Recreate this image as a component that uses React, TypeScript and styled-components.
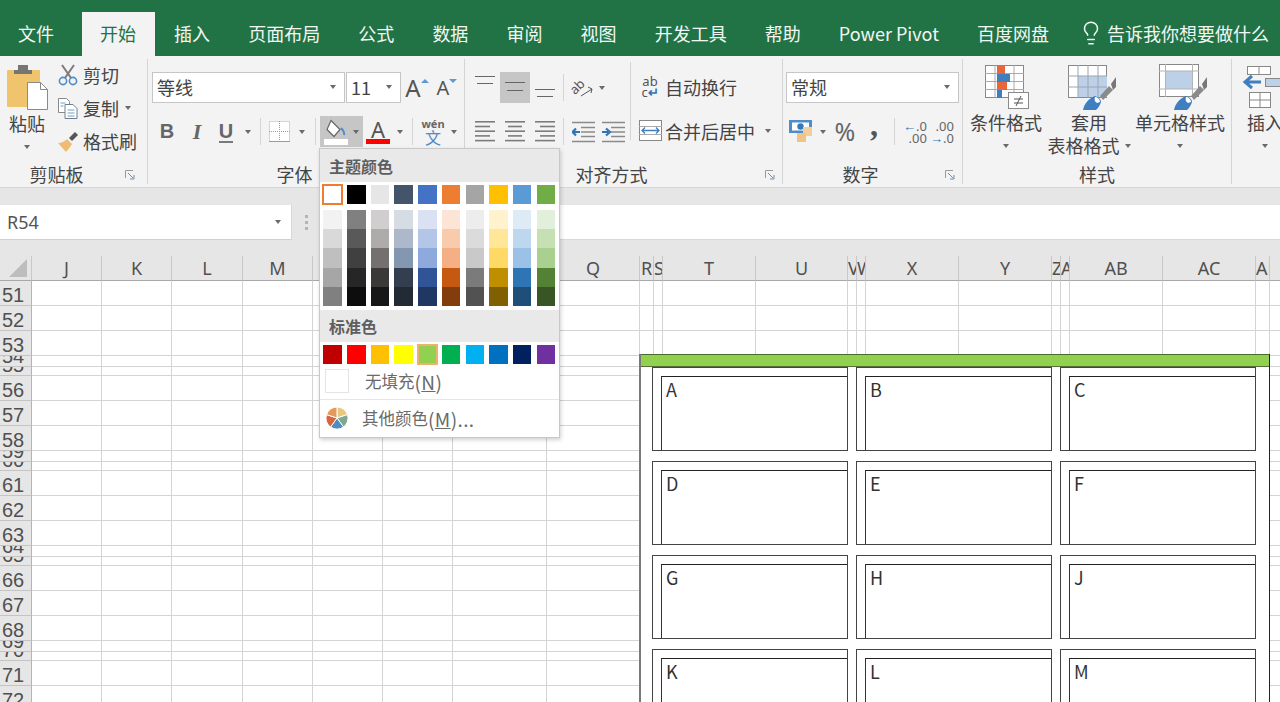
import React from "react";
import styled, { createGlobalStyle } from "styled-components";
import { Lightbulb } from "lucide-react";

const cjk = `"Noto Sans CJK SC", "Noto Sans", sans-serif`;
const ink = "#444";

const GlobalStyle = createGlobalStyle`
  html, body { margin: 0; padding: 0; height: 702px; overflow: hidden; background: #fff; }
  * { box-sizing: border-box; }
`;

const Page = styled.div`
  position: relative;
  width: 1280px;
  height: 702px;
  overflow: hidden;
  display: flex;
  flex-direction: column;
  font-family: ${cjk};
  color: ${ink};
`;

/* ---------- title tabs ---------- */
const TabBar = styled.div`
  height: 56px;
  flex: none;
  background: #217346;
  display: flex;
  align-items: flex-end;
`;

const Tab = styled.div<{ $active?: boolean; $first?: boolean }>`
  height: 44px;
  padding: 0 19px 3px ${(p) => (p.$first || p.$active ? "18px" : "19.1px")};
  margin-right: ${(p) => (p.$first ? "9px" : "0")};
  display: flex;
  align-items: center;
  font-size: 18px;
  white-space: nowrap;
  color: ${(p) => (p.$active ? "#217346" : "#f2f7f4")};
  background: ${(p) => (p.$active ? "#f3f3f3" : "transparent")};
`;

const TellMe = styled.div`
  height: 44px;
  margin-left: 10px;
  padding-bottom: 3px;
  display: flex;
  align-items: center;
  gap: 3px;
  font-size: 18px;
  white-space: nowrap;
  color: #f2f7f4;
`;

/* ---------- ribbon ---------- */
const Ribbon = styled.div`
  height: 132px;
  flex: none;
  background: #f3f3f3;
  border-bottom: 1px solid #d6d6d6;
  display: flex;
  padding-top: 3px;
  overflow: hidden;
`;

const Group = styled.div<{ $w: number; $tail: number }>`
  width: ${(p) => p.$w}px;
  flex: none;
  height: 125px;
  display: grid;
  grid-template-rows: 103px 22px;
  grid-template-columns: 1fr ${(p) => p.$tail}px;
  border-right: 1px solid #d4d4d4;
`;

const GroupBody = styled.div<{ $pad?: number }>`
  grid-column: 1 / 3;
  display: flex;
  padding-left: ${(p) => p.$pad ?? 0}px;
  min-width: 0;
`;

const GroupLabel = styled.div`
  font-size: 18px;
  line-height: 24px;
  text-align: center;
  white-space: nowrap;
`;

const Launcher = styled.svg`
  width: 10px;
  height: 10px;
  justify-self: center;
  align-self: center;
  margin-top: 3px;
`;

const ToolRows = styled.div<{ $ml?: number }>`
  display: flex;
  flex-direction: column;
  padding-top: 13px;
  gap: 13px;
  margin-left: ${(p) => p.$ml ?? 0}px;
`;

const ToolRow = styled.div`
  height: 31px;
  display: flex;
  align-items: center;
`;

const Tool = styled.div<{ $w: number; $active?: boolean; $ml?: number }>`
  width: ${(p) => p.$w}px;
  height: 31px;
  flex: none;
  margin-left: ${(p) => p.$ml ?? 0}px;
  display: flex;
  align-items: center;
  justify-content: center;
  background: ${(p) => (p.$active ? "#c6c6c6" : "transparent")};
`;

const Caret = styled.span<{ $ml?: number }>`
  display: inline-block;
  flex: none;
  margin-left: ${(p) => p.$ml ?? 0}px;
  width: 0;
  height: 0;
  border-left: 3.5px solid transparent;
  border-right: 3.5px solid transparent;
  border-top: 4px solid #6a6a6a;
`;

const Sep = styled.span<{ $ml?: number; $mr?: number }>`
  width: 1px;
  height: 27px;
  flex: none;
  background: #d4d4d4;
  margin-left: ${(p) => p.$ml ?? 0}px;
  margin-right: ${(p) => p.$mr ?? 0}px;
`;

const TallSep = styled.span`
  width: 1px;
  height: 78px;
  margin: 3px 0 0 2px;
  flex: none;
  background: #d4d4d4;
`;

const Select = styled.div<{ $w: number; $ml?: number }>`
  width: ${(p) => p.$w}px;
  height: 31px;
  flex: none;
  margin-left: ${(p) => p.$ml ?? 0}px;
  background: #fff;
  border: 1px solid #c6c6c6;
  display: flex;
  align-items: center;
  justify-content: space-between;
  padding: 0 8px 1px 4px;
  font-size: 18px;
`;

const PasteColumn = styled.div`
  width: 54px;
  flex: none;
  display: flex;
  flex-direction: column;
  align-items: center;
  padding-top: 6px;
  font-size: 18px;
  line-height: 22px;
`;

const PasteIcon = styled.svg`
  width: 42px;
  height: 46px;
  margin-bottom: 1px;
  margin-left: 2px;
`;

const PasteCaret = styled(Caret)`
  margin-top: 11px;
`;

const SmallColumn = styled.div`
  display: flex;
  flex-direction: column;
  margin-left: 3px;
`;

const SmallRow = styled.div`
  height: 33px;
  display: flex;
  align-items: center;
  gap: 4px;
  padding-bottom: 1px;
  font-size: 18px;
  white-space: nowrap;
`;

const SmallIcon = styled.svg`
  width: 22px;
  height: 22px;
  flex: none;
`;

const BoldLetter = styled.span`
  font-family: "Liberation Sans", sans-serif;
  font-weight: 700;
  font-size: 20px;
  color: #666;
`;

const ItalicLetter = styled(BoldLetter)`
  font-style: italic;
  font-family: "Liberation Serif", serif;
  font-size: 22px;
`;

const UnderLetter = styled(BoldLetter)`
  border-bottom: 2px solid #7a7a7a;
  line-height: 20px;
`;

const FontA = styled.span<{ $size: number }>`
  font-family: "Noto Sans", sans-serif;
  font-size: ${(p) => p.$size}px;
  color: #555;
  line-height: 1;
`;

const Tick = styled.span<{ $down?: boolean }>`
  align-self: flex-start;
  margin-top: 7px;
  width: 0;
  height: 0;
  border-left: 4px solid transparent;
  border-right: 4px solid transparent;
  ${(p) =>
    p.$down
      ? "border-top: 4px solid #5b9bd5;"
      : "border-bottom: 4px solid #5b9bd5;"}
`;

const ColorStack = styled.div`
  display: flex;
  flex-direction: column;
  align-items: center;
  width: 24px;
`;

const ColorBar = styled.span<{ $c: string }>`
  width: 24px;
  height: 5px;
  background: ${(p) => p.$c};
`;

const ColorLetter = styled.span`
  font-family: "Noto Sans", sans-serif;
  font-size: 22px;
  line-height: 20px;
  height: 20px;
  color: #555;
`;

const PhoneticStack = styled.div`
  display: flex;
  flex-direction: column;
  align-items: center;
  line-height: 1;
`;

const PhoneticTop = styled.span`
  font-family: "Noto Sans", sans-serif;
  font-size: 11px;
  font-weight: 700;
  color: #666;
`;

const PhoneticBottom = styled.span`
  font-size: 16px;
  color: #4f8cc9;
`;

const TextTool = styled.div`
  height: 31px;
  display: flex;
  align-items: center;
  font-size: 18px;
  white-space: nowrap;
  padding-bottom: 2px;
`;

const WrapIcon = styled.div`
  width: 22px;
  margin-right: 4px;
  font-family: "Noto Sans", sans-serif;
  font-size: 13px;
  line-height: 11px;
  color: #555;
  text-align: center;
`;

const BlueMark = styled.span`
  color: #2f75b5;
  font-weight: 700;
`;

const MergeIcon = styled.svg`
  width: 23px;
  height: 23px;
  margin-right: 3px;
  flex: none;
`;

const Percent = styled.span`
  font-family: "Noto Sans", sans-serif;
  font-size: 25px;
  color: #666;
  padding-bottom: 2px;
`;

const Comma = styled.span`
  font-family: "Liberation Serif", serif;
  font-weight: 700;
  font-size: 32px;
  line-height: 22px;
  color: #555;
  padding-bottom: 14px;
`;

const DecimalStack = styled.div`
  font-family: "Noto Sans", sans-serif;
  font-size: 13px;
  line-height: 12px;
  text-align: right;
  color: #666;
  white-space: nowrap;
`;

const BigButton = styled.div<{ $w: number }>`
  width: ${(p) => p.$w}px;
  flex: none;
  display: flex;
  flex-direction: column;
  align-items: center;
  padding-top: 4px;
  font-size: 18px;
  line-height: 23px;
  white-space: nowrap;
`;

const BigIcon = styled.svg`
  width: 50px;
  height: 48px;
  flex: none;
`;

const ShiftedIcon = styled(BigIcon)`
  margin-left: 5px;
`;

const CaretLine = styled.div`
  height: 23px;
  display: flex;
  align-items: center;
  justify-content: center;
`;

/* ---------- formula bar ---------- */
const FormulaStrip = styled.div`
  height: 68px;
  flex: none;
  background: #e6e6e6;
  padding: 17px 0 16px;
  display: flex;
`;

const NameBox = styled.div`
  width: 292px;
  height: 35px;
  background: #fff;
  border-bottom: 1px solid #d0d0d0;
  border-right: 1px solid #d8d8d8;
  display: flex;
  align-items: center;
  justify-content: space-between;
  padding: 0 10px 0 7px;
  font-family: "Noto Sans", sans-serif;
  font-size: 18px;
  color: #555;
`;

const Grip = styled.div`
  width: 28px;
  display: flex;
  flex-direction: column;
  align-items: center;
  justify-content: center;
  gap: 3px;
`;

const GripDot = styled.span`
  width: 3px;
  height: 3px;
  background: #b5b5b5;
`;

const FormulaInput = styled.div`
  flex: 1;
  background: #fff;
  border-bottom: 1px solid #d8d8d8;
`;

/* ---------- sheet ---------- */
const Sheet = styled.div`
  position: relative;
  flex: 1;
  overflow: hidden;
  background: #fff;
`;

const Cells = styled.div<{ $cols: string; $rows: string }>`
  display: grid;
  grid-template-columns: ${(p) => p.$cols};
  grid-template-rows: ${(p) => p.$rows};
`;

const Corner = styled.div`
  background: #e6e6e6;
  border-bottom: 1px solid #a8a8a8;
  border-right: 1px solid #c8c8c8;
  display: flex;
  align-items: flex-end;
  justify-content: flex-end;
  padding: 0 4px 3px 0;
`;

const CornerMark = styled.span`
  width: 0;
  height: 0;
  border-left: 18px solid transparent;
  border-bottom: 18px solid #bdbdbd;
`;

const ColHead = styled.div`
  background: #e6e6e6;
  border-bottom: 1px solid #a8a8a8;
  border-right: 1px solid #c8c8c8;
  overflow: hidden;
  display: flex;
  align-items: center;
  justify-content: safe center;
  font-family: "Noto Sans", sans-serif;
  font-size: 18px;
  color: #505050;
  white-space: nowrap;
`;

const RowHead = styled.div`
  background: #e6e6e6;
  border-bottom: 1px solid #c4c4c4;
  border-right: 1px solid #b4b4b4;
  overflow: hidden;
  display: flex;
  align-items: flex-end;
  padding-left: 2px;
  font-family: "Liberation Sans", sans-serif;
  font-size: 20px;
  line-height: 20px;
  color: #505050;
`;

const Cell = styled.div`
  border-right: 1px solid #d4d4d4;
  border-bottom: 1px solid #d4d4d4;
`;

/* ---------- shapes on the sheet ---------- */
const Panel = styled.div`
  position: absolute;
  left: 639px;
  top: 98px;
  width: 631px;
  height: 360px;
  background: #fff;
  border-left: 2px solid #7a7a7a;
  border-right: 1px solid #222;
`;

const PanelHeader = styled.div`
  height: 13px;
  background: #92d050;
  border-top: 1px solid #4a6a30;
  border-bottom: 1px solid #55703c;
`;

const PanelGrid = styled.div`
  display: grid;
  grid-template-columns: repeat(3, 196px);
  grid-auto-rows: 84px;
  column-gap: 8px;
  row-gap: 10px;
  padding-left: 11px;
`;

const Card = styled.div`
  border: 1px solid #444;
  padding: 8px 0 0 8px;
  display: flex;
`;

const CardInner = styled.div`
  flex: 1;
  border-top: 1px solid #222;
  border-left: 1px solid #333;
  padding-left: 4px;
  font-size: 18px;
  line-height: 24px;
  color: #333;
`;

/* ---------- colour menu ---------- */
const Menu = styled.div`
  position: absolute;
  left: 319px;
  top: 148px;
  width: 241px;
  height: 290px;
  background: #fff;
  border: 1px solid #c8c8c8;
  box-shadow: 1px 2px 4px rgba(0, 0, 0, 0.18);
`;

const MenuTitle = styled.div`
  height: 33px;
  background: #e9e9e9;
  padding-left: 9px;
  display: flex;
  align-items: center;
  font-size: 16px;
  font-weight: 700;
  color: #5e5e5e;
`;

const MenuTitleSecond = styled(MenuTitle)`
  margin-top: 4px;
  height: 32px;
`;

const Palette = styled.div<{ $mt: number }>`
  display: grid;
  grid-template-columns: repeat(10, 18.5px);
  column-gap: 5.2px;
  margin-top: ${(p) => p.$mt}px;
  padding-left: 3.4px;
`;

const Swatch = styled.div<{ $c: string; $ring?: string; $h?: number }>`
  height: ${(p) => p.$h ?? 18.5}px;
  background: ${(p) => p.$c};
  ${(p) => (p.$ring ? `outline: 2px solid ${p.$ring}; outline-offset: -1px;` : "")}
`;

const ShadeColumn = styled.div`
  display: flex;
  flex-direction: column;
`;

const MenuItem = styled.div<{ $h: number; $line?: boolean }>`
  height: ${(p) => p.$h}px;
  display: flex;
  align-items: center;
  font-size: 16.5px;
  color: #6a6a6a;
  white-space: nowrap;
  ${(p) => (p.$line ? "border-top: 1px solid #e6e6e6;" : "")}
`;

const NoFillBox = styled.span`
  width: 24px;
  height: 24px;
  margin: 0 16px 0 5px;
  border: 1px solid #e4e4e4;
  flex: none;
`;

const PieIcon = styled.svg`
  width: 24px;
  height: 24px;
  margin: 0 13px 0 5px;
  flex: none;
`;

const Hotkey = styled.span`
  font-size: 19px;
  letter-spacing: 0.4px;
`;

const HotkeyLetter = styled.span`
  text-decoration: underline;
`;

/* ---------- drawings ---------- */
const LauncherMark = () => (
  <Launcher viewBox="0 0 10 10">
    <path d="M0.5 8V0.5H8" fill="none" stroke="#9a9a9a" />
    <path d="M3 3l5 5M5 9h4V5" fill="none" stroke="#6f8fae" />
  </Launcher>
);

const HLines = ({ rows, w = 20 }: { rows: [number, number][]; w?: number }) => (
  <svg width={w} height={21} viewBox={`0 0 ${w} 21`}>
    {rows.map(([a, b], i) => (
      <rect key={i} x={a} y={i * 4.7} width={b - a} height={1.6} fill="#7c7c7c" />
    ))}
  </svg>
);

const VAlign = ({ y1, y2 }: { y1: number; y2: number }) => (
  <svg width={20} height={31} viewBox="0 0 20 31">
    <path d={`M0 ${y1 + 0.5}H20M2 ${y2 + 0.5}H18`} stroke="#666" strokeWidth="1" />
  </svg>
);

const Indent = ({ flip }: { flip?: boolean }) => (
  <svg width={23} height={22} viewBox="0 0 23 22">
    <path d="M0 1.5H23M9 6.5H23M9 11H23M9 15.5H23M0 20.5H23" stroke="#8a8a8a" strokeWidth="1.5" />
    <path
      d={flip ? "M0 11H6M4 7.5L8 11L4 14.5" : "M8 11H2M4 7.5L0.5 11L4 14.5"}
      fill="none"
      stroke="#2f75b5"
      strokeWidth="2.2"
    />
  </svg>
);

const ScissorsIcon = () => (
  <SmallIcon viewBox="0 0 22 22">
    <path d="M5 1l9 13M17 1L8 14" stroke="#7b7b7b" strokeWidth="2" fill="none" />
    <circle cx="6" cy="17" r="3.6" fill="none" stroke="#4f8cc9" strokeWidth="1.6" />
    <circle cx="16" cy="17" r="3.6" fill="none" stroke="#4f8cc9" strokeWidth="1.6" />
  </SmallIcon>
);

const CopyIcon = () => (
  <SmallIcon viewBox="0 0 22 22">
    <path d="M1.5 1.5h8l3 3v11h-11z" fill="#fff" stroke="#8a8a8a" />
    <path d="M8 7.5h8l4 4v10H8z" fill="#fff" stroke="#6f7f8f" />
    <path d="M3.5 6h5M3.5 9h3M10.5 13h7M10.5 16h7M10.5 19h7" stroke="#6f9fca" />
  </SmallIcon>
);

const BrushIcon = () => (
  <SmallIcon viewBox="0 0 22 22">
    <path d="M1 13c4 0 7-2 9-4l5 5c-2 3-4 6-6 8-2-2-5-6-8-9z" fill="#eebc72" />
    <path d="M12 8l6-6 3 3-6 6z" fill="#555" />
  </SmallIcon>
);

const BorderIcon = () => (
  <svg width={21} height={21} viewBox="0 0 21 21">
    <rect x="0.5" y="0.5" width="20" height="20" fill="#fff" stroke="#b0b0b0" strokeDasharray="1 1" />
    <path d="M10.5 0V21M0 10.5H21" stroke="#9a9a9a" strokeDasharray="1 1" />
    <path d="M0 20.5H21" stroke="#9a9a9a" />
  </svg>
);

const BucketIcon = () => (
  <svg width={24} height={26} viewBox="0 0 24 26">
    <path d="M7 1.5l9 9-6 7-7-7z" fill="#fff" stroke="#666" strokeWidth="1.2" />
    <path d="M17 9c2 2 4 4 3 7" fill="none" stroke="#4f8cc9" strokeWidth="2" />
    <rect x="0" y="20" width="24" height="6" fill="#fff" />
  </svg>
);

const OrientIcon = () => (
  <svg width={24} height={22} viewBox="0 0 24 22">
    <text x="0" y="15" fontSize="13" fontFamily="Noto Sans" fill="#555" transform="rotate(-45 6 12)">
      ab
    </text>
    <path d="M10 19l11-7M17 10l4 2-1 4" fill="none" stroke="#555" />
  </svg>
);

const CurrencyIcon = () => (
  <svg width={24} height={23} viewBox="0 0 24 23">
    <rect x="0" y="0" width="23" height="13" fill="#4f8cc9" />
    <rect x="3" y="2.5" width="17" height="8" fill="#fff" />
    <circle cx="11.5" cy="6.5" r="3.2" fill="#3a78b8" />
    <rect x="14" y="7" width="9" height="9" fill="#f0cf9c" />
    <rect x="8" y="13" width="9" height="9" fill="#eec585" />
  </svg>
);

const CondIcon = () => (
  <BigIcon viewBox="0 0 50 48">
    <rect x="4.5" y="2.5" width="38" height="32" fill="#fff" stroke="#888" />
    <path d="M4 10.5H43M4 18.5H43M4 26.5H43M14 2V35M33 2V35" stroke="#aaa" />
    <rect x="16" y="3" width="8" height="8" fill="#e8663a" />
    <rect x="16" y="11" width="13" height="8" fill="#3f7fc1" />
    <rect x="16" y="19" width="10" height="8" fill="#e8663a" />
    <rect x="16" y="27" width="5" height="8" fill="#3f7fc1" />
    <rect x="27.5" y="29.5" width="20" height="16" fill="#fff" stroke="#8a8a8a" />
    <path d="M33 36h9M33 40h9M40 33l-5 10" stroke="#555" fill="none" />
  </BigIcon>
);

const BrushOver = () => (
  <>
    <path d="M33 33l9-10 4 4-10 10z" fill="#8a8a8a" />
    <path d="M44 21l5-7v10l-3 3z" fill="#777" />
    <path d="M16 47c1-6 6-12 12-14 3 1 6 3 6 6-1 3-2 5-5 8z" fill="#3f7fc1" />
    <path d="M28 34c2 0 5 2 5 5l-3 1c-2-1-3-3-2-6z" fill="#fff" />
  </>
);

const TableIcon = () => (
  <ShiftedIcon viewBox="0 0 50 48">
    <rect x="1.5" y="2.5" width="38" height="32" fill="#fff" stroke="#888" />
    <path d="M11 13H40V34H11z" fill="#bcd0e8" />
    <path d="M1 13H40M1 24H40M11 2V35M21 2V35M31 2V35" stroke="#9aa5b0" fill="none" />
    <BrushOver />
  </ShiftedIcon>
);

const CellStyleIcon = () => (
  <ShiftedIcon viewBox="0 0 50 48">
    <rect x="1.5" y="1.5" width="39" height="32" fill="#fff" stroke="#888" />
    <rect x="7.5" y="8" width="27" height="18" fill="#bcd0e8" />
    <path d="M1 8H41M1 26H41M7.5 1V34M34.5 1V34" stroke="#b4b4b4" fill="none" />
    <BrushOver />
  </ShiftedIcon>
);

const InsertIcon = () => (
  <BigIcon viewBox="0 0 50 48">
    <rect x="7.5" y="3.5" width="23" height="8" fill="#fff" stroke="#888" />
    <path d="M19 3v8" stroke="#888" />
    <path d="M21 19H6M12 13l-7 6 7 6" fill="none" stroke="#3f7fc1" strokeWidth="3" />
    <rect x="25.5" y="15.5" width="24" height="8" fill="#bcd0e8" stroke="#888" />
    <rect x="9.5" y="29.5" width="21" height="15" fill="#fff" stroke="#888" />
    <path d="M20 29v16M9 37h22" stroke="#888" />
  </BigIcon>
);

/* ---------- data ---------- */
const tabs = ["插入", "页面布局", "公式", "数据", "审阅", "视图", "开发工具", "帮助", "Power Pivot", "百度网盘"];

const colWidths = [70, 70, 71, 70, 70, 70, 94, 93, 14, 9, 93, 92, 9, 9, 93, 93, 9, 9, 93, 93, 14, 100];
const colNames = ["J", "K", "L", "M", "N", "O", "P", "Q", "R", "S", "T", "U", "V", "W", "X", "Y", "Z", "AA", "AB", "AC", "AD", "AE"];
const rowHeights = [25, 25, 25, 11, 9];
const rowNumbers = Array.from({ length: 22 }, (_, i) => 51 + i);

const themeTop = ["#ffffff", "#000000", "#e7e6e6", "#44546a", "#4472c4", "#ed7d31", "#a5a5a5", "#ffc000", "#5b9bd5", "#70ad47"];
const themeShades = [
  ["#f2f2f2", "#d9d9d9", "#bfbfbf", "#a6a6a6", "#808080"],
  ["#808080", "#595959", "#404040", "#262626", "#0d0d0d"],
  ["#d0cece", "#aeabab", "#757070", "#3b3838", "#181717"],
  ["#d6dce4", "#adb9ca", "#8497b0", "#333f4f", "#222b35"],
  ["#d9e1f2", "#b4c6e7", "#8ea9db", "#305496", "#203764"],
  ["#fce4d6", "#f8cbad", "#f4b084", "#c65911", "#833c0c"],
  ["#ededed", "#dbdbdb", "#c9c9c9", "#7b7b7b", "#525252"],
  ["#fff2cc", "#ffe699", "#ffd966", "#bf8f00", "#806000"],
  ["#ddebf7", "#bdd7ee", "#9bc2e6", "#2f75b5", "#1f4e78"],
  ["#e2efda", "#c6e0b4", "#a9d08e", "#548235", "#375623"],
];
const standard = ["#c00000", "#ff0000", "#ffc000", "#ffff00", "#92d050", "#00b050", "#00b0f0", "#0070c0", "#002060", "#7030a0"];
const cards = ["A", "B", "C", "D", "E", "F", "G", "H", "J", "K", "L", "M"];

const pieSlices = [
  { d: "M12 12L12 1A11 11 0 0 1 22.5 8.6Z", c: "#e9c77f" },
  { d: "M12 12L22.5 8.6A11 11 0 0 1 18.5 21Z", c: "#7fa98f" },
  { d: "M12 12L18.5 21A11 11 0 0 1 5.5 21Z", c: "#4f8cc0" },
  { d: "M12 12L5.5 21A11 11 0 0 1 1.5 8.6Z", c: "#d9643f" },
  { d: "M12 12L1.5 8.6A11 11 0 0 1 12 1Z", c: "#e39a5b" },
];

const App = () => {
  const sheetColumns = ["32px", ...colWidths.map((w) => `${w}px`)].join(" ");
  const sheetRows = [
    "25px",
    ...rowNumbers.map((n) => `${rowHeights[(n - 51) % 5]}px`),
  ].join(" ");

  return (
    <Page>
      <GlobalStyle />
      <TabBar>
        <Tab $first>文件</Tab>
        <Tab $active>开始</Tab>
        {tabs.map((t) => (
          <Tab key={t}>{t}</Tab>
        ))}
        <TellMe>
          <Lightbulb size={26} strokeWidth={1.4} />
          告诉我你想要做什么
        </TellMe>
      </TabBar>

      <Ribbon>
        {/* clipboard */}
        <Group $w={148} $tail={34}>
          <GroupBody>
            <PasteColumn>
              <PasteIcon viewBox="0 0 42 46">
                <rect x="0" y="5" width="33" height="37" rx="1" fill="#f0c36d" />
                <path d="M11 5V0h10v5h4v4H7V5z" fill="#757575" />
                <path d="M20.5 17.5h13l7 7v20h-20z" fill="#fff" stroke="#8a8a8a" />
                <path d="M33.5 17.5v7h7" fill="none" stroke="#8a8a8a" />
              </PasteIcon>
              粘贴
              <PasteCaret />
            </PasteColumn>
            <SmallColumn>
              <SmallRow>
                <ScissorsIcon />
                剪切
              </SmallRow>
              <SmallRow>
                <CopyIcon />
                复制
                <Caret $ml={2} />
              </SmallRow>
              <SmallRow>
                <BrushIcon />
                格式刷
              </SmallRow>
            </SmallColumn>
          </GroupBody>
          <GroupLabel>剪贴板</GroupLabel>
          <LauncherMark />
        </Group>

        {/* font */}
        <Group $w={317} $tail={23}>
          <GroupBody $pad={4}>
            <ToolRows>
              <ToolRow>
                <Select $w={193}>
                  等线
                  <Caret />
                </Select>
                <Select $w={55} $ml={1}>
                  11
                  <Caret />
                </Select>
                <Tool $w={30} $ml={1}>
                  <FontA $size={24}>A</FontA>
                  <Tick />
                </Tool>
                <Tool $w={30}>
                  <FontA $size={20}>A</FontA>
                  <Tick $down />
                </Tool>
              </ToolRow>
              <ToolRow>
                <Tool $w={30}>
                  <BoldLetter>B</BoldLetter>
                </Tool>
                <Tool $w={30}>
                  <ItalicLetter>I</ItalicLetter>
                </Tool>
                <Tool $w={28}>
                  <UnderLetter>U</UnderLetter>
                </Tool>
                <Tool $w={16}>
                  <Caret />
                </Tool>
                <Sep $ml={4} $mr={3} />
                <Tool $w={30}>
                  <BorderIcon />
                </Tool>
                <Tool $w={16}>
                  <Caret />
                </Tool>
                <Sep $ml={5} $mr={4} />
                <Tool $w={43} $active>
                  <BucketIcon />
                  <Caret $ml={5} />
                </Tool>
                <Tool $w={28} $ml={1}>
                  <ColorStack>
                    <ColorLetter>A</ColorLetter>
                    <ColorBar $c="#ff0000" />
                  </ColorStack>
                </Tool>
                <Tool $w={16}>
                  <Caret />
                </Tool>
                <Sep $ml={4} $mr={7} />
                <Tool $w={26}>
                  <PhoneticStack>
                    <PhoneticTop>wén</PhoneticTop>
                    <PhoneticBottom>文</PhoneticBottom>
                  </PhoneticStack>
                </Tool>
                <Tool $w={16}>
                  <Caret />
                </Tool>
              </ToolRow>
            </ToolRows>
          </GroupBody>
          <GroupLabel>字体</GroupLabel>
          <LauncherMark />
        </Group>

        {/* alignment */}
        <Group $w={318} $tail={24}>
          <GroupBody $pad={5}>
            <ToolRows>
              <ToolRow>
                <Tool $w={30}>
                  <VAlign y1={4} y2={11} />
                </Tool>
                <Tool $w={30} $active>
                  <VAlign y1={10} y2={18} />
                </Tool>
                <Tool $w={30}>
                  <VAlign y1={17} y2={24} />
                </Tool>
                <Sep $ml={3} $mr={4} />
                <Tool $w={30}>
                  <OrientIcon />
                </Tool>
                <Caret $ml={1} />
              </ToolRow>
              <ToolRow>
                <Tool $w={30}>
                  <HLines rows={[[0, 20], [0, 15], [0, 20], [0, 15], [0, 20]]} />
                </Tool>
                <Tool $w={30}>
                  <HLines rows={[[0, 20], [3, 17], [0, 20], [3, 17], [0, 20]]} />
                </Tool>
                <Tool $w={30}>
                  <HLines rows={[[0, 20], [5, 20], [0, 20], [5, 20], [0, 20]]} />
                </Tool>
                <Sep $ml={3} $mr={4} />
                <Tool $w={30}>
                  <Indent />
                </Tool>
                <Tool $w={30}>
                  <Indent flip />
                </Tool>
              </ToolRow>
            </ToolRows>
            <TallSep />
            <ToolRows $ml={8}>
              <TextTool>
                <WrapIcon>
                  ab
                  <br />
                  c<BlueMark>↵</BlueMark>
                </WrapIcon>
                自动换行
              </TextTool>
              <TextTool>
                <MergeIcon viewBox="0 0 23 23">
                  <rect x="0.5" y="1.5" width="22" height="20" fill="#fff" stroke="#888" />
                  <path d="M0 7.5H23M0 15.5H23" stroke="#aaa" />
                  <path d="M3 11.5H20M6 8.5L3 11.5L6 14.5M17 8.5L20 11.5L17 14.5" fill="none" stroke="#3f7fc1" strokeWidth="1.3" />
                </MergeIcon>
                合并后居中
                <Caret $ml={10} />
              </TextTool>
            </ToolRows>
          </GroupBody>
          <GroupLabel>对齐方式</GroupLabel>
          <LauncherMark />
        </Group>

        {/* number */}
        <Group $w={180} $tail={24}>
          <GroupBody $pad={3}>
            <ToolRows>
              <ToolRow>
                <Select $w={173}>
                  常规
                  <Caret />
                </Select>
              </ToolRow>
              <ToolRow>
                <Tool $w={30}>
                  <CurrencyIcon />
                </Tool>
                <Tool $w={14}>
                  <Caret />
                </Tool>
                <Tool $w={30}>
                  <Percent>%</Percent>
                </Tool>
                <Tool $w={28}>
                  <Comma>,</Comma>
                </Tool>
                <Sep $ml={6} $mr={8} />
                <Tool $w={24}>
                  <DecimalStack>
                    <BlueMark>←</BlueMark>.0
                    <br />
                    .00
                  </DecimalStack>
                </Tool>
                <Tool $w={30}>
                  <DecimalStack>
                    .00
                    <br />
                    <BlueMark>→</BlueMark>.0
                  </DecimalStack>
                </Tool>
              </ToolRow>
            </ToolRows>
          </GroupBody>
          <GroupLabel>数字</GroupLabel>
          <LauncherMark />
        </Group>

        {/* styles */}
        <Group $w={269} $tail={0}>
          <GroupBody $pad={4}>
            <BigButton $w={78}>
              <CondIcon />
              条件格式
              <CaretLine>
                <Caret />
              </CaretLine>
            </BigButton>
            <BigButton $w={88}>
              <TableIcon />
              套用
              <CaretLine>
                表格格式
                <Caret $ml={5} />
              </CaretLine>
            </BigButton>
            <BigButton $w={94}>
              <CellStyleIcon />
              单元格样式
              <CaretLine>
                <Caret />
              </CaretLine>
            </BigButton>
          </GroupBody>
          <GroupLabel>样式</GroupLabel>
        </Group>

        {/* cells, cut off by the window */}
        <Group $w={120} $tail={0}>
          <GroupBody $pad={5}>
            <BigButton $w={56}>
              <InsertIcon />
              插入
              <CaretLine>
                <Caret />
              </CaretLine>
            </BigButton>
          </GroupBody>
        </Group>
      </Ribbon>

      <FormulaStrip>
        <NameBox>
          R54
          <Caret />
        </NameBox>
        <Grip>
          <GripDot />
          <GripDot />
          <GripDot />
        </Grip>
        <FormulaInput />
      </FormulaStrip>

      <Sheet>
        <Cells $cols={sheetColumns} $rows={sheetRows}>
          <Corner>
            <CornerMark />
          </Corner>
          {colNames.map((c) => (
            <ColHead key={c}>{c}</ColHead>
          ))}
          {rowNumbers.map((n) => (
            <React.Fragment key={n}>
              <RowHead>{n}</RowHead>
              {colNames.map((c) => (
                <Cell key={c} />
              ))}
            </React.Fragment>
          ))}
        </Cells>
        <Panel>
          <PanelHeader />
          <PanelGrid>
            {cards.map((c) => (
              <Card key={c}>
                <CardInner>{c}</CardInner>
              </Card>
            ))}
          </PanelGrid>
        </Panel>
      </Sheet>

      <Menu>
        <MenuTitle>主题颜色</MenuTitle>
        <Palette $mt={3}>
          {themeTop.map((c, i) => (
            <Swatch key={c} $c={c} $ring={i === 0 ? "#ed7d31" : undefined} />
          ))}
        </Palette>
        <Palette $mt={6}>
          {themeShades.map((col, i) => (
            <ShadeColumn key={i}>
              {col.map((c) => (
                <Swatch key={c} $c={c} $h={19.4} />
              ))}
            </ShadeColumn>
          ))}
        </Palette>
        <MenuTitleSecond>标准色</MenuTitleSecond>
        <Palette $mt={3}>
          {standard.map((c, i) => (
            <Swatch key={c} $c={c} $ring={i === 4 ? "#f0b070" : undefined} />
          ))}
        </Palette>
        <MenuItem $h={35}>
          <NoFillBox />
          无填充
          <Hotkey>
            (<HotkeyLetter>N</HotkeyLetter>)
          </Hotkey>
        </MenuItem>
        <MenuItem $h={38} $line>
          <PieIcon viewBox="0 0 24 24">
            {pieSlices.map((s) => (
              <path key={s.c} d={s.d} fill={s.c} stroke="#fff" strokeWidth="1" />
            ))}
          </PieIcon>
          其他颜色
          <Hotkey>
            (<HotkeyLetter>M</HotkeyLetter>)...
          </Hotkey>
        </MenuItem>
      </Menu>
    </Page>
  );
};

export default App;
